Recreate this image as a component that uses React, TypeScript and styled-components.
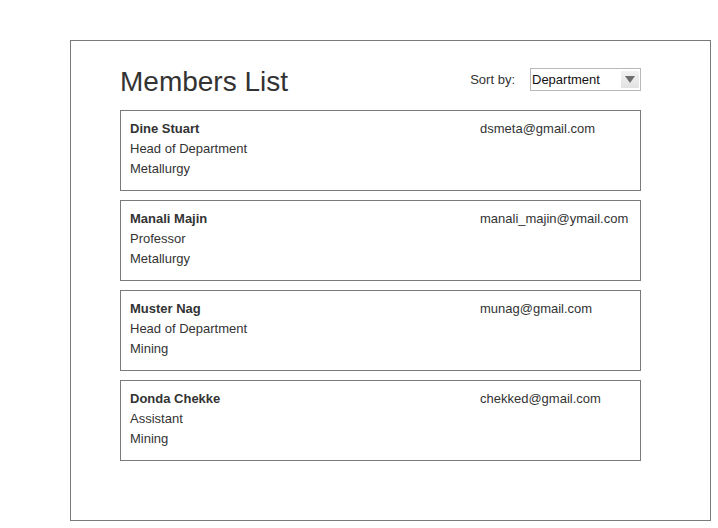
import styled, { createGlobalStyle } from "styled-components";

const GlobalStyle = createGlobalStyle`
  body {
    margin: 0;
    background: #ffffff;
    font-family: "Liberation Sans", Arial, sans-serif;
    color: #333333;
  }
`;

const Page = styled.div`
  padding: 40px 0 0 70px;
`;

const Frame = styled.div`
  box-sizing: border-box;
  width: 641px;
  height: 481px;
  border: 1px solid #7a7a7a;
  padding: 25px 0 0 49px;
`;

const Content = styled.div`
  width: 521px;
`;

const Header = styled.div`
  display: flex;
  justify-content: space-between;
  align-items: flex-start;
  height: 32px;
  margin-bottom: 12px;
`;

const Title = styled.h1`
  margin: 0;
  font-size: 28px;
  line-height: 32px;
  font-weight: normal;
  color: #333333;
`;

const SortBox = styled.div`
  display: flex;
  align-items: center;
  gap: 15px;
  margin-top: 2px;
  font-size: 13px;
`;

const Select = styled.div`
  box-sizing: border-box;
  width: 111px;
  height: 23px;
  border: 1px solid #b8b8b8;
  display: flex;
  align-items: center;
  justify-content: space-between;
  padding: 0 1px 0 1px;
  font-size: 13px;
  color: #111111;
`;

const ArrowBox = styled.div`
  width: 18px;
  height: 17px;
  background: linear-gradient(#f2f2f2, #e2e2e2);
  display: flex;
  align-items: center;
  justify-content: center;
`;

const Arrow = styled.div`
  width: 0;
  height: 0;
  border-left: 5px solid transparent;
  border-right: 5px solid transparent;
  border-top: 7px solid #6e6e6e;
`;

const List = styled.div`
  display: flex;
  flex-direction: column;
  gap: 9px;
`;

const Card = styled.div`
  box-sizing: border-box;
  height: 81px;
  border: 1px solid #7a7a7a;
  padding: 8px 9px 11px;
  display: grid;
  grid-template-columns: 1fr 151px;
  font-size: 13px;
  line-height: 20px;
`;

const Name = styled.div`
  font-weight: bold;
`;

const Line = styled.div``;

const Email = styled.div``;

const members = [
  { name: "Dine Stuart", role: "Head of Department", dept: "Metallurgy", email: "dsmeta@gmail.com" },
  { name: "Manali Majin", role: "Professor", dept: "Metallurgy", email: "manali_majin@ymail.com" },
  { name: "Muster Nag", role: "Head of Department", dept: "Mining", email: "munag@gmail.com" },
  { name: "Donda Chekke", role: "Assistant", dept: "Mining", email: "chekked@gmail.com" },
];

const App = () => {
  return (
    <Page>
      <GlobalStyle />
      <Frame>
        <Content>
          <Header>
            <Title>Members List</Title>
            <SortBox>
              <span>Sort by:</span>
              <Select>
                <span>Department</span>
                <ArrowBox>
                  <Arrow />
                </ArrowBox>
              </Select>
            </SortBox>
          </Header>
          <List>
            {members.map((m) => (
              <Card key={m.name}>
                <div>
                  <Name>{m.name}</Name>
                  <Line>{m.role}</Line>
                  <Line>{m.dept}</Line>
                </div>
                <Email>{m.email}</Email>
              </Card>
            ))}
          </List>
        </Content>
      </Frame>
    </Page>
  );
};

export default App;
